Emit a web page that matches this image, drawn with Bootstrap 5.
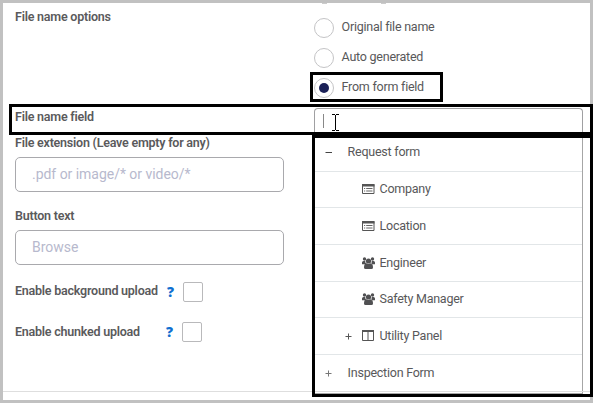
<!DOCTYPE html>
<html lang="en">
<head>
<meta charset="utf-8">
<title>File upload settings</title>
<link href="https://cdn.jsdelivr.net/npm/bootstrap@5.3.0/dist/css/bootstrap.min.css" rel="stylesheet">
<style>
body{width:593px;height:403px;font-family:Roboto,"Liberation Sans",sans-serif;font-size:12.5px;letter-spacing:-.24px;line-height:18px;color:#58585a;background:#fff}
.panel{height:403px;border:3px solid #c1c1c1}
.left-col{width:297px;padding:5px 0 0 12px}
.right-col{width:272px;margin-left:14px}
.lbl{font-weight:600;font-size:12.5px;letter-spacing:-.23px;line-height:18px;white-space:nowrap;color:#5a5a5c}
.lbl-options{margin-bottom:82px}
.lbl-field{margin-bottom:8px}
.lbl-input{margin-bottom:5px}
.lbl-button{margin-top:15px}
.field{width:269px;height:35px;padding:0 0 2px 16px;border:1px solid #a9a9ad;border-radius:5px;font-size:14px;color:#b7b9cd;letter-spacing:-.03px}
.field::placeholder{color:#b7b9cd;opacity:1}
.check-row{margin-top:17px}
.check-row + .check-row{margin-top:20px}
.check-row + .check-row .lbl{padding-top:1px}
.help{font-family:"Open Sans",sans-serif;font-weight:800;font-size:14px;line-height:19px;color:#0f6fd0;width:9px}
.box{width:20px;height:20px;margin-left:7px;border:1px solid #b9b9bb;border-radius:2px}
.clipped{height:15px}
.opt{height:30px;padding-bottom:10px}
.dot{width:20px;height:20px;border:1px solid #c4c4c6;border-radius:50%}
.dot i{width:10px;height:10px;border-radius:50%;background:#1b2158}
.opt-text{margin:-2px 0 0 7.6px}
.search{width:269px;height:27px;border:1px solid #a0a0a2;border-bottom:0;border-radius:4px 4px 0 0;padding:5px 0 0 8px}
.caret{width:1px;height:14px;background:#888}
.ibeam{margin-left:7px}
.tree{width:269px;height:259px;border-right:1px solid #a6a6a6;border-bottom:1px solid #a6a6a6}
.tree-row{height:36.7px;border-bottom:1px solid #e2e6e8;padding-left:10px;padding-bottom:.8px}
.tree-row.child{padding-left:48px}
.tree-row.branch{padding-left:30px}
.toggle{width:9px;height:9px;margin-top:1px}
.root-text{margin-left:14.6px}
.item-text{margin-left:4.5px}
.frame{border:3px solid #000;pointer-events:none}
.frame-option{left:310px;top:72px;width:133px;height:30px}
.frame-field{left:9px;top:104px;width:584px;height:31px}
.frame-tree{left:312px;top:135px;width:281px;height:262px}
.rule{left:3px;top:391px;width:587px;height:1px;background:#dedede}
.top-cut{left:322px;top:3px}
</style>
<script src="https://cdn.jsdelivr.net/npm/bootstrap@5.3.0/dist/js/bootstrap.bundle.min.js"></script>
</head>
<body class="position-relative overflow-hidden">
<main class="panel d-flex overflow-hidden">
  <section class="left-col flex-shrink-0">
    <div class="lbl lbl-options">File name options</div>
    <div class="lbl lbl-field">File name field</div>
    <label class="lbl lbl-input d-block" for="ext">File extension (Leave empty for any)</label>
    <input id="ext" class="field d-block" placeholder=".pdf or image/* or video/*">
    <label class="lbl lbl-input lbl-button d-block" for="btn">Button text</label>
    <input id="btn" class="field d-block" placeholder="Browse">
    <div class="check-row d-flex">
      <div class="lbl" style="width:152px">Enable background upload</div>
      <span class="help">?</span><span class="box"></span>
    </div>
    <div class="check-row d-flex">
      <div class="lbl" style="width:151px">Enable chunked upload</div>
      <span class="help">?</span><span class="box"></span>
    </div>
  </section>
  <section class="right-col flex-shrink-0">
    <div class="clipped"></div>
    <div class="opt d-flex align-items-center"><span class="dot"></span><span class="opt-text">Original file name</span></div>
    <div class="opt d-flex align-items-center"><span class="dot"></span><span class="opt-text">Auto generated</span></div>
    <div class="opt d-flex align-items-center"><span class="dot d-flex align-items-center justify-content-center"><i></i></span><span class="opt-text">From form field</span></div>
    <div class="search d-flex">
      <span class="caret"></span>
      <svg class="ibeam" width="9" height="17" viewBox="0 0 9 17" fill="none" stroke="#000" stroke-width="1" shape-rendering="crispEdges"><path d="M1 .5h3M5 .5h3M4.500 1v15M1 16.500h3M5 16.500h3"/></svg>
    </div>
    <div class="tree">
      <div class="tree-row d-flex align-items-center">
        <svg class="toggle" viewBox="0 0 9 9"><path d="M1.500 4.500h6.500" stroke="#444"/></svg><span class="root-text">Request form</span></div>
      <div class="tree-row child d-flex align-items-center"><svg width="13" height="10"><use href="#form"/></svg><span class="item-text">Company</span></div>
      <div class="tree-row child d-flex align-items-center"><svg width="13" height="10"><use href="#form"/></svg><span class="item-text">Location</span></div>
      <div class="tree-row child d-flex align-items-center"><svg width="13" height="12"><use href="#group"/></svg><span class="item-text">Engineer</span></div>
      <div class="tree-row child d-flex align-items-center"><svg width="13" height="12"><use href="#group"/></svg><span class="item-text">Safety Manager</span></div>
      <div class="tree-row branch d-flex align-items-center">
        <svg class="toggle" viewBox="0 0 9 9"><path d="M1.500 4.500h6M4.500 1.500v6" stroke="#555"/></svg>
        <svg width="13" height="11" style="margin-left:9px"><path d="M.5 1v9.500h11V1M6 1v9.500" fill="none" stroke="#555"/><path d="M0 1h12" stroke="#555" stroke-width="2"/></svg><span class="item-text">Utility Panel</span></div>
      <div class="tree-row d-flex align-items-center">
        <svg class="toggle" viewBox="0 0 9 9"><path d="M1.500 4.500h6M4.500 1.500v6" stroke="#777"/></svg><span class="root-text">Inspection Form</span></div>
    </div>
  </section>
</main>
<svg class="d-none">
  <symbol id="form" viewBox="0 0 13 10"><path d="M.5.5h11.500v9H.5z" fill="#fff" stroke="#555"/><path d="M0 0h12.500v2.500H0z" fill="#555"/><path d="M2 4.500h1.200M4.200 4.500h6.300M2 7h1.200M4.200 7h6.300" stroke="#666"/></symbol>
  <symbol id="group" viewBox="0 0 13 12"><g fill="#505052"><circle cx="2.500" cy="2" r="1.700"/><circle cx="10.500" cy="2" r="1.700"/><circle cx="6.500" cy="4" r="2.600"/><path d="M0 7.200V5.500Q0 4 1.500 4h1.700q0 2 1 2.700L3 7.200zM13 7.200V5.500Q13 4 11.500 4H9.800q0 2-1 2.700l1.200.5zM2 10.500q0-4 2.500-4.200 2 1.400 4 0Q11 6.500 11 10.500q0 1.500-1.500 1.500h-6Q2 12 2 10.500z"/></g></symbol>
</svg>
<div class="position-absolute rule"></div>
<svg class="position-absolute top-cut" width="65" height="1"><path d="M0 .5h5M59 .5h5" stroke="#ccc"/></svg>
<div class="position-absolute frame frame-option"></div>
<div class="position-absolute frame frame-field"></div>
<div class="position-absolute frame frame-tree"></div>
</body>
</html>
